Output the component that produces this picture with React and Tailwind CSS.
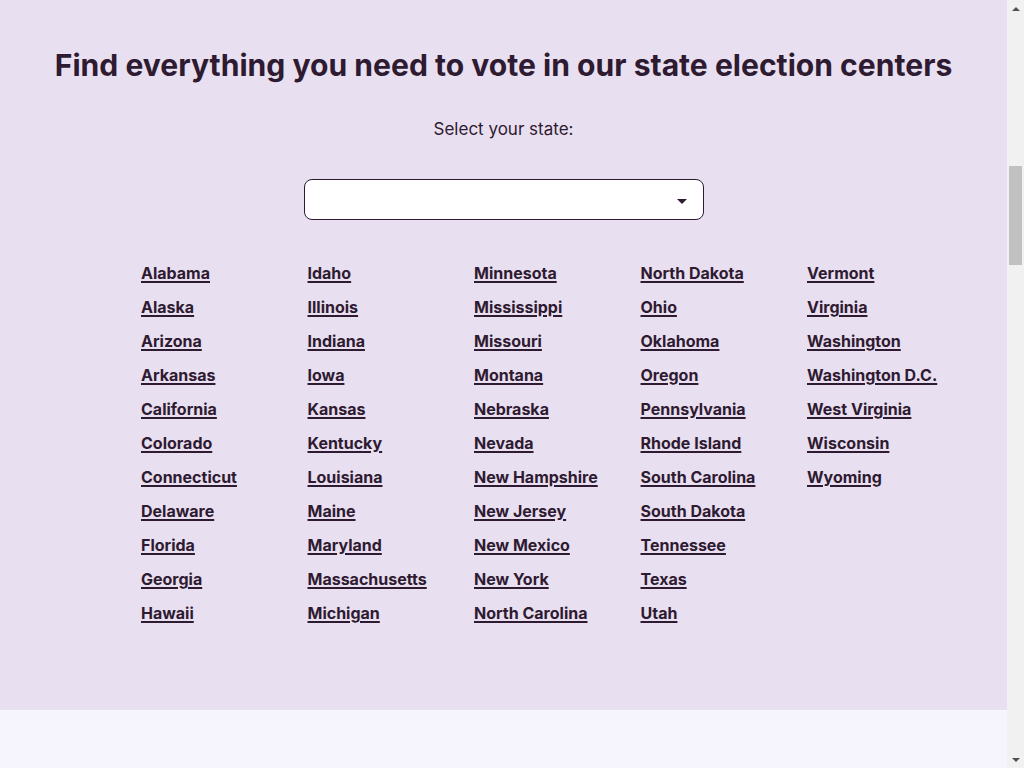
import React from "react";

const cols = [
  ["Alabama","Alaska","Arizona","Arkansas","California","Colorado","Connecticut","Delaware","Florida","Georgia","Hawaii"],
  ["Idaho","Illinois","Indiana","Iowa","Kansas","Kentucky","Louisiana","Maine","Maryland","Massachusetts","Michigan"],
  ["Minnesota","Mississippi","Missouri","Montana","Nebraska","Nevada","New Hampshire","New Jersey","New Mexico","New York","North Carolina"],
  ["North Dakota","Ohio","Oklahoma","Oregon","Pennsylvania","Rhode Island","South Carolina","South Dakota","Tennessee","Texas","Utah"],
  ["Vermont","Virginia","Washington","Washington D.C.","West Virginia","Wisconsin","Wyoming"],
];

export default function App() {
  return (
    <div className="flex h-[768px] overflow-hidden text-[#2e1a31]" style={{ fontFamily: "Inter, 'Noto Sans', sans-serif" }}>
      <main className="w-[1007px] shrink-0 flex flex-col bg-[#f6f4fd]">
        <section className="bg-[#e8dff0] pt-[45px] pb-[86px]">
          <h1 className="text-center text-[30.1px] leading-[40px] font-bold">
            Find everything you need to vote in our state election centers
          </h1>
          <p className="mt-[33px] text-center text-[17px] leading-[22px]">Select your state:</p>
          <div className="mt-[39px] flex justify-center">
            <div className="relative w-[400px] h-[41px] rounded-[8px] border border-[#2e1a31] bg-white">
              <div className="absolute right-[16px] top-[19px] w-0 h-0 border-l-[5px] border-r-[5px] border-t-[5px] border-l-transparent border-r-transparent border-t-[#2e1a31]" />
            </div>
          </div>
          <div className="mt-[42px] pl-[141px] grid grid-cols-[repeat(5,166.5px)]">
            {cols.map((c, i) => (
              <ul key={i} className="flex flex-col gap-[12px]">
                {c.map((s) => (
                  <li key={s} className="h-[22px] leading-[22px]">
                    <a href="#" className="text-[16px] font-bold underline underline-offset-[2px] decoration-[1.5px] whitespace-nowrap">{s}</a>
                  </li>
                ))}
              </ul>
            ))}
          </div>
        </section>
        <div className="flex-1 bg-[#f6f4fd]" />
      </main>
      <aside className="w-[17px] shrink-0 flex flex-col items-center bg-[#f1f1f1]">
        <div className="h-[17px] flex items-center justify-center">
          <div className="w-0 h-0 border-l-[4px] border-r-[4px] border-b-[4px] border-l-transparent border-r-transparent border-b-[#505050]" />
        </div>
        <div className="mt-[149px] w-[13px] h-[99px] bg-[#c1c1c1]" />
        <div className="flex-1" />
        <div className="h-[17px] flex items-center justify-center">
          <div className="w-0 h-0 border-l-[4px] border-r-[4px] border-t-[4px] border-l-transparent border-r-transparent border-t-[#505050]" />
        </div>
      </aside>
    </div>
  );
}
